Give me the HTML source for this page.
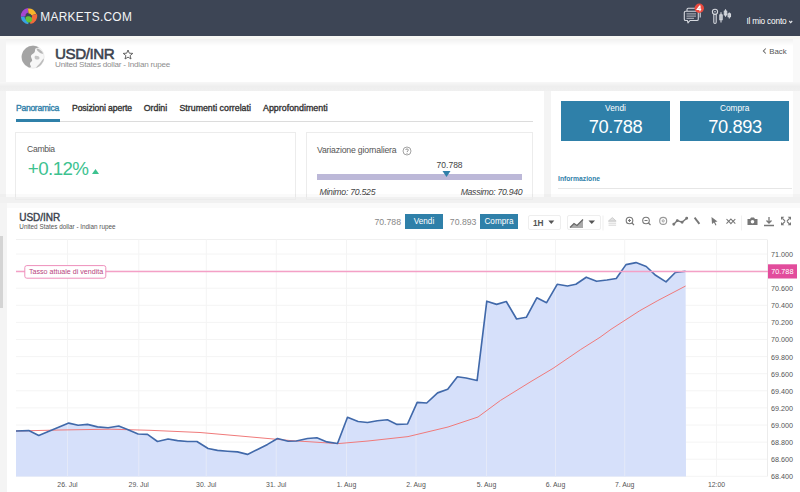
<!DOCTYPE html>
<html><head><meta charset="utf-8"><style>
html,body{margin:0;padding:0;width:800px;height:492px;overflow:hidden;background:#f4f4f4;position:relative}
.t{position:absolute;white-space:nowrap;line-height:1;font-family:"Liberation Sans", sans-serif}
</style></head><body>
<div style="position:absolute;left:0px;top:0px;width:800px;height:35.5px;background:#3d4555"></div><div style="position:absolute;left:0px;top:35.5px;width:800px;height:3.0px;background:#f8f8f5"></div><svg style="position:absolute;left:20.3px;top:7px" width="18" height="18" viewBox="0 0 18 18"><path d="M0.83 9.71 A8.2 8.2 0 0 1 7.86 0.88 L8.51 5.53 A3.5 3.5 0 0 0 5.51 9.31 Z" fill="#a646d0"/><path d="M7.94 1.47 A7.6 7.6 0 0 1 16.34 7.03 L11.41 8.35 A2.5 2.5 0 0 0 8.65 6.52 Z" fill="#f7b52a"/><path d="M16.92 6.88 A8.2 8.2 0 0 1 10.42 17.08 L9.52 11.95 A3 3 0 0 0 11.90 8.22 Z" fill="#f26a3a"/><path d="M8.29 17.17 A8.2 8.2 0 0 1 0.83 9.71 L4.52 9.39 A4.5 4.5 0 0 0 8.61 13.48 Z" fill="#36a3e3"/><path d="M5.5 10.5 C7 8.5 10.5 9 11.8 11 C12.8 13 11.5 15.3 9.2 15.5 C7 15.6 5.2 13.5 5.5 10.5 Z" fill="#62c437"/></svg><div class="t" style="left:40.30px;top:12.13px;font-size:11.9px;color:#f4f5f7;letter-spacing:0.3px">MARKETS.COM</div><svg style="position:absolute;left:680px;top:2px" width="56" height="24" viewBox="0 0 56 24" fill="none" stroke="#d5d8de" stroke-width="1.1" stroke-linejoin="round">
<path d="M7 9 V7.5 a1.2 1.2 0 0 1 1.2 -1.2 H15"/>
<path d="M18.5 10 H19 a1.2 1.2 0 0 1 1.2 1.2 V15.5"/>
<path d="M5.6 9.2 H17 a1.3 1.3 0 0 1 1.3 1.3 V17.2 a1.3 1.3 0 0 1 -1.3 1.3 H10 L8 20.8 L7.4 18.5 H5.6 a1.3 1.3 0 0 1 -1.3 -1.3 V10.5 a1.3 1.3 0 0 1 1.3 -1.3 Z"/>
<path d="M6.5 11.9 H16 M6.5 14.1 H16 M6.5 16.3 H14" stroke-width="0.8"/>
<circle cx="35" cy="9.8" r="2.6"/><circle cx="35" cy="9.8" r="0.8" fill="#d5d8de" stroke="none"/><path d="M33.8 12.2 V20.3 a1.2 1.2 0 0 0 2.4 0 V12.2"/>
<path d="M41 10.3 V20.6 M39.8 12.8 h2.4 v5 h-2.4 z"/>
<path d="M45.5 7.3 V14.7 M44.3 9 h2.4 v4 h-2.4 z"/>
<path d="M49.3 10.5 V16.5 M48.1 11.8 h2.4 v3 h-2.4 z"/>
</svg><svg style="position:absolute;left:694px;top:3px" width="11" height="11" viewBox="0 0 11 11"><circle cx="5.3" cy="5.3" r="4.7" fill="#ea4a3f"/><path d="M6 2.6 L3.2 6.3 H7.2 M6 2.6 V8.2" stroke="#fff" stroke-width="1.2" fill="none"/></svg><div class="t" style="left:746.40px;top:17.47px;font-size:8.3px;color:#ffffff;letter-spacing:-0.2px">Il mio conto</div><svg style="position:absolute;left:788px;top:19px" width="6" height="6" viewBox="0 0 6 6"><path d="M1.2 2 L2.7 3.6 L4.2 2" stroke="#e3e6ea" stroke-width="1.1" fill="none"/></svg><div style="position:absolute;left:0px;top:81.5px;width:800px;height:9.5px;background:linear-gradient(#f7f7f7,#eeeeee 50%,#f0f0f0)"></div><div style="position:absolute;left:0px;top:197px;width:800px;height:6px;background:#f1f1f1"></div><div style="position:absolute;left:6px;top:38.5px;width:787px;height:43.0px;background:linear-gradient(#f1f1f1,#ffffff 7px)"></div><div style="position:absolute;left:793px;top:38.5px;width:7px;height:43.0px;background:#f9f9f9"></div><svg style="position:absolute;left:21px;top:45px" width="24" height="24" viewBox="0 0 24 24">
<circle cx="12" cy="12" r="11.2" fill="#f7f7f7" stroke="#e2e2e2" stroke-width="0.6"/>
<path d="M12.5 0.8 A11.2 11.2 0 0 0 7.5 22.3 C9.5 23 10.5 22 9.5 20.5 C8.5 19 9 17.5 10.5 16.5 C12 15.5 10.5 13.5 10 12 C9.5 10 11.5 9 13 8 C14.5 7 13.5 5 14.5 3.5 C15.5 2.5 17 2.5 18 2.8 C16.5 1.5 14.5 0.8 12.5 0.8 Z" fill="#a4a4a4"/>
<path d="M15.5 3.5 C18 3.5 21 5.5 22.2 8.5 C21 9 19.5 8.5 18.5 7.5 C17.5 6.5 15.5 5.5 15.5 3.5 Z" fill="#b6b6b6"/>
<path d="M14 11 C16 10.5 18.5 11.5 18.5 13 C18.5 14.5 16 14.8 14.5 14.2 C13.5 13.6 13.3 11.5 14 11 Z" fill="#c4c4c4"/>
<path d="M23 13.5 C22.5 17.5 19.5 21.5 15 23 C16 21 18 19.5 19.5 17.5 C20.5 16 21.5 14.5 23 13.5 Z" fill="#bdbdbd"/>
</svg><div class="t" style="left:55.00px;top:45.53px;font-size:15.2px;color:#3b424e;-webkit-text-stroke:0.55px #3b424e;letter-spacing:-0.45px">USD/INR</div><svg style="position:absolute;left:122px;top:49px" width="12" height="11" viewBox="0 0 12 11"><path d="M6 1 L7.3 4.2 L10.8 4.4 L8.1 6.6 L9 10 L6 8.1 L3 10 L3.9 6.6 L1.2 4.4 L4.7 4.2 Z" fill="none" stroke="#555" stroke-width="0.9" stroke-linejoin="round"/></svg><div class="t" style="left:55.00px;top:61.44px;font-size:8.1px;color:#8e8e8e;letter-spacing:-0.22px">United States dollar - Indian rupee</div><svg style="position:absolute;left:760px;top:46px" width="9" height="10" viewBox="0 0 9 10"><path d="M5.8 2.5 L3.4 5 L5.8 7.5" fill="none" stroke="#666" stroke-width="1.05"/></svg><div class="t" style="left:769.30px;top:48.20px;font-size:7.8px;color:#555">Back</div><div style="position:absolute;left:6px;top:91px;width:538px;height:106px;background:#fff"></div><div class="t" style="left:16.00px;top:104.32px;font-size:8.6px;color:#2f80a9;-webkit-text-stroke:0.35px #2f80a9;letter-spacing:-0.3px">Panoramica</div><div class="t" style="left:72.00px;top:104.32px;font-size:8.6px;color:#333;-webkit-text-stroke:0.35px #333;letter-spacing:-0.07px">Posizioni aperte</div><div class="t" style="left:143.75px;top:104.15px;font-size:8.8px;color:#333;-webkit-text-stroke:0.35px #333">Ordini</div><div class="t" style="left:179.50px;top:104.15px;font-size:8.8px;color:#333;-webkit-text-stroke:0.35px #333">Strumenti correlati</div><div class="t" style="left:263.00px;top:104.07px;font-size:8.9px;color:#333;-webkit-text-stroke:0.35px #333">Approfondimenti</div><div style="position:absolute;left:16px;top:120.5px;width:517px;height:1.0px;background:#dcdcdc"></div><div style="position:absolute;left:16px;top:119px;width:44px;height:2.5px;background:#2f80a9"></div><div style="position:absolute;left:15px;top:132px;width:281px;height:68px;border:1px solid #ececec;box-sizing:border-box"></div><div class="t" style="left:27.00px;top:145.32px;font-size:8.6px;color:#555;letter-spacing:-0.3px">Cambia</div><div class="t" style="left:27.80px;top:159.69px;font-size:18.8px;color:#3dc28f;letter-spacing:-0.6px">+0.12%</div><svg style="position:absolute;left:91px;top:168px" width="9" height="7" viewBox="0 0 9 7"><path d="M1 6 L4.5 1 L8 6 Z" fill="#3dc28f"/></svg><div style="position:absolute;left:306px;top:132px;width:227px;height:68px;border:1px solid #ececec;box-sizing:border-box"></div><div class="t" style="left:317.00px;top:145.94px;font-size:8.7px;color:#555;letter-spacing:-0.18px">Variazione giornaliera</div><svg style="position:absolute;left:402.2px;top:145.5px" width="10" height="10" viewBox="0 0 10 10"><circle cx="5" cy="5" r="4" fill="none" stroke="#9a9a9a" stroke-width="0.9"/><path d="M3.6 4 C3.6 2.6 6.4 2.6 6.4 4 C6.4 5 5 5 5 6" fill="none" stroke="#888" stroke-width="0.9"/><circle cx="5" cy="7.3" r="0.55" fill="#888"/></svg><div class="t" style="left:436.60px;top:160.80px;font-size:8.5px;color:#444">70.788</div><div style="position:absolute;left:317px;top:174px;width:205px;height:5.5px;background:#bcb8d8"></div><svg style="position:absolute;left:442px;top:171px" width="9" height="6" viewBox="0 0 9 6"><path d="M0.5 0 L8.5 0 L4.5 6 Z" fill="#2f7fa9"/></svg><div class="t" style="left:319.40px;top:187.94px;font-size:8.7px;color:#444;font-style:italic;letter-spacing:-0.25px">Minimo: 70.525</div><div class="t" style="left:122.30px;width:400px;text-align:right;top:187.64px;font-size:8.7px;color:#444;font-style:italic;letter-spacing:-0.3px">Massimo: 70.940</div><div style="position:absolute;left:551px;top:91px;width:242px;height:106px;background:#fff"></div><div style="position:absolute;left:793px;top:91px;width:7px;height:106px;background:#f8f8f8"></div><div style="position:absolute;left:561px;top:101px;width:109px;height:39.5px;background:#2f80a9"></div><div style="position:absolute;left:680px;top:101px;width:109px;height:39.5px;background:#2f80a9"></div><div class="t" style="left:415.50px;width:400px;text-align:center;top:103.87px;font-size:8.3px;color:#fff">Vendi</div><div class="t" style="left:415.50px;width:400px;text-align:center;top:118.41px;font-size:18.3px;color:#fff;letter-spacing:-0.4px">70.788</div><div class="t" style="left:534.70px;width:400px;text-align:center;top:103.87px;font-size:8.3px;color:#fff">Compra</div><div class="t" style="left:535.00px;width:400px;text-align:center;top:118.41px;font-size:18.3px;color:#fff;letter-spacing:-0.4px">70.893</div><div class="t" style="left:558.00px;top:175.79px;font-size:6.75px;color:#2f80a9;font-weight:bold">Informazione</div><div style="position:absolute;left:558px;top:188px;width:234px;height:1px;background:#e6e6e6"></div><div style="position:absolute;left:7px;top:203px;width:793px;height:289px;background:#fff"></div><div style="position:absolute;left:0px;top:193.5px;width:800px;height:3.5px;background:rgba(0,0,0,0.018)"></div><div style="position:absolute;left:7px;top:203px;width:793px;height:5px;background:rgba(0,0,0,0.018)"></div><div style="position:absolute;left:0px;top:236px;width:3px;height:71.5px;background:#d4d4d4"></div><div class="t" style="left:19.30px;top:213.23px;font-size:10px;color:#3b424e;-webkit-text-stroke:0.4px #3b424e;letter-spacing:-0.05px">USD/INR</div><div class="t" style="left:19.30px;top:224.22px;font-size:6.35px;color:#555">United States dollar - Indian rupee</div><div class="t" style="left:1.00px;width:400px;text-align:right;top:217.84px;font-size:8.7px;color:#888">70.788</div><div style="position:absolute;left:405px;top:214px;width:38px;height:15px;background:#2f80a9"></div><div class="t" style="left:224.00px;width:400px;text-align:center;top:218.06px;font-size:8.2px;color:#fff">Vendi</div><div class="t" style="left:76.40px;width:400px;text-align:right;top:217.84px;font-size:8.7px;color:#888">70.893</div><div style="position:absolute;left:480px;top:214px;width:38px;height:15px;background:#2f80a9"></div><div class="t" style="left:299.00px;width:400px;text-align:center;top:218.06px;font-size:8.2px;color:#fff">Compra</div><div style="position:absolute;left:528px;top:214.5px;width:33px;height:15.0px;border:1px solid #eeeeee;box-sizing:border-box;border-radius:2px"></div><div class="t" style="left:533.00px;top:218.67px;font-size:8.3px;color:#555;font-weight:bold">1H</div><svg style="position:absolute;left:548px;top:219.5px" width="7" height="5" viewBox="0 0 7 5"><path d="M0.3 0.5 L6.3 0.5 L3.3 4 Z" fill="#555"/></svg><div style="position:absolute;left:567px;top:214.5px;width:34px;height:15.0px;border:1px solid #eeeeee;box-sizing:border-box;border-radius:2px"></div><svg style="position:absolute;left:569px;top:218px" width="16" height="11" viewBox="0 0 16 11"><path d="M1 10 L5 5.5 L8 7.5 L14 1.5 L14 10 Z" fill="#aaa"/><path d="M1 9.5 L5 5.5 L8 7.5 L14 1.5" stroke="#666" stroke-width="1.3" fill="none"/></svg><svg style="position:absolute;left:588px;top:219.5px" width="8" height="5" viewBox="0 0 8 5"><path d="M0.5 0.5 L7 0.5 L3.75 4 Z" fill="#555"/></svg><svg style="position:absolute;left:0;top:0" width="800" height="492" viewBox="0 0 800 492">
<g fill="none" stroke="#ccc" stroke-width="1">
<path d="M608.5 221 L612.3 217.6 L616.1 221 Z" fill="#e2e2e2"/><path d="M608.5 221.2 h7.6 M608.5 223.2 h7.6 M608.5 225.2 h7.6" stroke-width="0.9" stroke="#d0d0d0"/>
</g>
<g fill="none" stroke="#777" stroke-width="1.1">
<circle cx="629.5" cy="220.5" r="3.3"/><path d="M632 223 l2 2 M628 220.5 h3 M629.5 219 v3"/>
<circle cx="646" cy="220.5" r="3.3"/><path d="M648.5 223 l2 2 M644.5 220.5 h3"/>
<circle cx="663.2" cy="220.9" r="3.5" stroke="#999"/><circle cx="663.2" cy="220.9" r="1.1" stroke="#999" stroke-width="0.9"/>
<path d="M673.8 224.2 L677.3 220.6 L682.1 222.2 L686.7 218.2" stroke-width="1.5"/><circle cx="673.8" cy="224.2" r="0.9" fill="#777"/><circle cx="677.3" cy="220.6" r="0.9" fill="#777"/><circle cx="682.1" cy="222.2" r="0.9" fill="#777"/><circle cx="686.7" cy="218.2" r="0.9" fill="#777"/>
<path d="M694.6 217.6 L699.4 223.8" stroke-width="1.9"/>
<path d="M726.5 219 l2.2 2.4 l2.2 -2.4 l2.2 2.4 l2.2 -2.4 M726.5 223.6 l2.2 -2.4 l2.2 2.4 l2.2 -2.4 l2.2 2.4" stroke-width="1.1"/>
<path d="M741.5 215.5 v15" stroke="#f0f0f0"/><path d="M603 215.5 v15" stroke="#f0f0f0"/>
<path d="M769 217 v6 M766.5 220.5 l2.5 2.5 l2.5 -2.5 M764 225.5 h10" stroke-width="1.3"/>
<path d="M782.5 218.5 l2.6 2.6 M789.5 218.5 l-2.6 2.6 M782.5 224 l2.6 -2.6 M789.5 224 l-2.6 -2.6" stroke-width="1.1"/>
</g>
<g fill="#777">
<path d="M711.5 217 L717.5 221.5 L715 222 L716.5 225 L715.5 225.5 L714 222.5 L712 224 Z"/>
<path d="M747.5 219 h2.5 l1 -1.5 h3 l1 1.5 h2.5 v6 h-10 z"/><path d="M781 216.8 h3.3 l-3.3 3.3 z M791 216.8 h-3.3 l3.3 3.3 z M781 225.3 h3.3 l-3.3 -3.3 z M791 225.3 h-3.3 l3.3 -3.3 z"/>
</g>
<circle cx="752.5" cy="221.8" r="1.8" fill="#fff"/>
</svg><svg style="position:absolute;left:0;top:0" width="800" height="492" viewBox="0 0 800 492">
<path d="M16 239.5 H767" stroke="#f0f0f0" stroke-width="1"/>
<g stroke="#f4f4f4" stroke-width="1" fill="none"><path d="M16 254.0 H767"/><path d="M16 271.1 H767"/><path d="M16 288.2 H767"/><path d="M16 305.3 H767"/><path d="M16 322.4 H767"/><path d="M16 339.5 H767"/><path d="M16 356.6 H767"/><path d="M16 373.7 H767"/><path d="M16 390.8 H767"/><path d="M16 407.9 H767"/><path d="M16 425.0 H767"/><path d="M16 442.1 H767"/><path d="M16 459.2 H767"/><path d="M16 476.3 H767"/><path d="M67.5 239.5 V476.5"/><path d="M138.75 239.5 V476.5"/><path d="M206.25 239.5 V476.5"/><path d="M276.25 239.5 V476.5"/><path d="M346.5 239.5 V476.5"/><path d="M416 239.5 V476.5"/><path d="M486.5 239.5 V476.5"/><path d="M555.5 239.5 V476.5"/><path d="M624.7 239.5 V476.5"/><path d="M716.5 239.5 V476.5"/></g>
<defs><clipPath id="fc"><polygon points="16,476.5 16,431 28.75,430.6 38.75,435.4 68.75,423.1 78.1,425.25 87.5,424.4 97.5,426.9 108.1,427.75 118.75,426 127.5,429.4 138.1,434 147.5,434.4 157.5,441.5 168.1,439 177.5,440.6 187.5,441.5 196.9,441.5 208.1,448.5 217.5,450.4 227.5,451.25 237.5,451.9 247.5,454.4 257.5,449.4 267.5,444.4 277.5,438.5 288.1,441.25 296.25,441 307.5,438.5 316.9,437.75 326.9,441.9 337.5,443.5 347.5,417.25 358.1,421.5 367.5,422.5 377.3,420.7 387.4,419.8 397,424.4 407.5,424 417.2,402.4 426.7,403 437.6,392.9 447.7,389.25 457.4,376.8 466.1,378 477.1,380.5 486.8,301.2 496.6,304.4 506.3,301.5 516.6,319 526.3,317.3 536.8,297.8 546.6,302.7 557.2,284.3 567.5,286 575.9,284.3 586.25,277.2 596.6,281.3 606.9,280 616.25,278.5 626,264.6 636,262.6 646.25,266.5 655.6,275.3 666,281.9 675.3,272.5 685.6,271.2 686,476.5"/></clipPath></defs>
<polygon points="16,476.5 16,431 28.75,430.6 38.75,435.4 68.75,423.1 78.1,425.25 87.5,424.4 97.5,426.9 108.1,427.75 118.75,426 127.5,429.4 138.1,434 147.5,434.4 157.5,441.5 168.1,439 177.5,440.6 187.5,441.5 196.9,441.5 208.1,448.5 217.5,450.4 227.5,451.25 237.5,451.9 247.5,454.4 257.5,449.4 267.5,444.4 277.5,438.5 288.1,441.25 296.25,441 307.5,438.5 316.9,437.75 326.9,441.9 337.5,443.5 347.5,417.25 358.1,421.5 367.5,422.5 377.3,420.7 387.4,419.8 397,424.4 407.5,424 417.2,402.4 426.7,403 437.6,392.9 447.7,389.25 457.4,376.8 466.1,378 477.1,380.5 486.8,301.2 496.6,304.4 506.3,301.5 516.6,319 526.3,317.3 536.8,297.8 546.6,302.7 557.2,284.3 567.5,286 575.9,284.3 586.25,277.2 596.6,281.3 606.9,280 616.25,278.5 626,264.6 636,262.6 646.25,266.5 655.6,275.3 666,281.9 675.3,272.5 685.6,271.2 686,476.5" fill="#d6e0fa"/>
<g stroke="#e4e9f8" stroke-width="1" fill="none" clip-path="url(#fc)"><path d="M67.5 239.5 V476.5"/><path d="M138.75 239.5 V476.5"/><path d="M206.25 239.5 V476.5"/><path d="M276.25 239.5 V476.5"/><path d="M346.5 239.5 V476.5"/><path d="M416 239.5 V476.5"/><path d="M486.5 239.5 V476.5"/><path d="M555.5 239.5 V476.5"/><path d="M624.7 239.5 V476.5"/><path d="M716.5 239.5 V476.5"/></g>
<polyline points="16,431 60,430 110,429.2 150,430.3 200,432.5 240,436 290,440.5 338,443.6 368,441 408,436.6 448,427 478,417 500.5,400.4 531,381.5 553,368.4 580.7,349.5 600,337.3 611,329.3 639.6,310.8 657.9,300.5 685.6,286" fill="none" stroke="#f07a7a" stroke-width="1"/>
<polyline points="16,431 28.75,430.6 38.75,435.4 68.75,423.1 78.1,425.25 87.5,424.4 97.5,426.9 108.1,427.75 118.75,426 127.5,429.4 138.1,434 147.5,434.4 157.5,441.5 168.1,439 177.5,440.6 187.5,441.5 196.9,441.5 208.1,448.5 217.5,450.4 227.5,451.25 237.5,451.9 247.5,454.4 257.5,449.4 267.5,444.4 277.5,438.5 288.1,441.25 296.25,441 307.5,438.5 316.9,437.75 326.9,441.9 337.5,443.5 347.5,417.25 358.1,421.5 367.5,422.5 377.3,420.7 387.4,419.8 397,424.4 407.5,424 417.2,402.4 426.7,403 437.6,392.9 447.7,389.25 457.4,376.8 466.1,378 477.1,380.5 486.8,301.2 496.6,304.4 506.3,301.5 516.6,319 526.3,317.3 536.8,297.8 546.6,302.7 557.2,284.3 567.5,286 575.9,284.3 586.25,277.2 596.6,281.3 606.9,280 616.25,278.5 626,264.6 636,262.6 646.25,266.5 655.6,275.3 666,281.9 675.3,272.5 685.6,271.2" fill="none" stroke="#4169aa" stroke-width="1.65" stroke-linejoin="round"/>
<path d="M767.5 239.5 V476.5" stroke="#ececec" stroke-width="1"/>
<path d="M16 271.5 H768" stroke="#f4a0c6" stroke-width="1.3"/>
<rect x="24.8" y="265.6" width="81" height="12.6" rx="2" fill="#fff" stroke="#ee8fbb" stroke-width="1"/>
<rect x="768" y="264.3" width="29" height="14.2" fill="#e24c9c"/>
</svg><div class="t" style="left:29.00px;top:269.19px;font-size:7.1px;color:#b8457e">Tasso attuale di vendita</div><div class="t" style="left:582.30px;width:400px;text-align:center;top:268.42px;font-size:7.3px;color:#fff">70.788</div><div class="t" style="left:771.00px;top:250.91px;font-size:7.2px;color:#555">71.000</div><div class="t" style="left:771.00px;top:285.11px;font-size:7.2px;color:#555">70.600</div><div class="t" style="left:771.00px;top:302.21px;font-size:7.2px;color:#555">70.400</div><div class="t" style="left:771.00px;top:319.31px;font-size:7.2px;color:#555">70.200</div><div class="t" style="left:771.00px;top:336.41px;font-size:7.2px;color:#555">70.000</div><div class="t" style="left:771.00px;top:353.51px;font-size:7.2px;color:#555">69.800</div><div class="t" style="left:771.00px;top:370.61px;font-size:7.2px;color:#555">69.600</div><div class="t" style="left:771.00px;top:387.71px;font-size:7.2px;color:#555">69.400</div><div class="t" style="left:771.00px;top:404.81px;font-size:7.2px;color:#555">69.200</div><div class="t" style="left:771.00px;top:421.91px;font-size:7.2px;color:#555">69.000</div><div class="t" style="left:771.00px;top:439.01px;font-size:7.2px;color:#555">68.800</div><div class="t" style="left:771.00px;top:456.11px;font-size:7.2px;color:#555">68.600</div><div class="t" style="left:771.00px;top:473.21px;font-size:7.2px;color:#555">68.400</div><div class="t" style="left:-132.50px;width:400px;text-align:center;top:482.16px;font-size:6.9px;color:#555">26. Jul</div><div class="t" style="left:-61.25px;width:400px;text-align:center;top:482.16px;font-size:6.9px;color:#555">29. Jul</div><div class="t" style="left:6.25px;width:400px;text-align:center;top:482.16px;font-size:6.9px;color:#555">30. Jul</div><div class="t" style="left:76.25px;width:400px;text-align:center;top:482.16px;font-size:6.9px;color:#555">31. Jul</div><div class="t" style="left:146.50px;width:400px;text-align:center;top:482.16px;font-size:6.9px;color:#555">1. Aug</div><div class="t" style="left:216.00px;width:400px;text-align:center;top:482.16px;font-size:6.9px;color:#555">2. Aug</div><div class="t" style="left:286.50px;width:400px;text-align:center;top:482.16px;font-size:6.9px;color:#555">5. Aug</div><div class="t" style="left:355.50px;width:400px;text-align:center;top:482.16px;font-size:6.9px;color:#555">6. Aug</div><div class="t" style="left:424.70px;width:400px;text-align:center;top:482.16px;font-size:6.9px;color:#555">7. Aug</div><div class="t" style="left:516.50px;width:400px;text-align:center;top:482.16px;font-size:6.9px;color:#555">12:00</div>
</body></html>
